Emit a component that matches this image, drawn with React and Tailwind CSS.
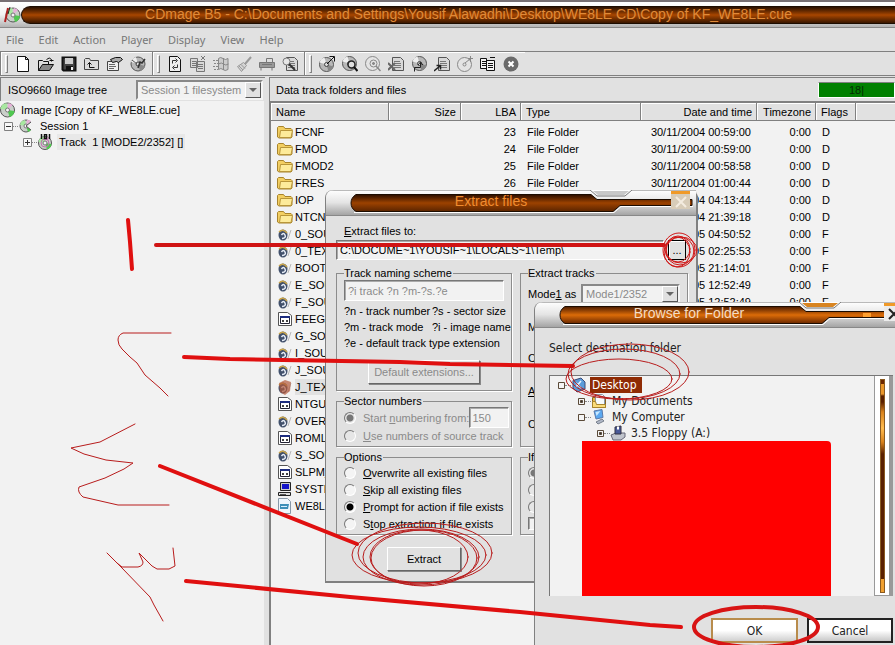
import clsx from 'clsx';

const menus = ['File', 'Edit', 'Action', 'Player', 'Display', 'View', 'Help'];

const columns = [
  { label: 'Name', width: 'w-[118px]' },
  { label: 'Size', width: 'w-[72px]', right: true },
  { label: 'LBA', width: 'w-[60px]', right: true },
  { label: 'Type', width: 'w-[120px]' },
  { label: 'Date and time', width: 'w-[116px]', right: true },
  { label: 'Timezone', width: 'w-[59px]', right: true },
  { label: 'Flags', width: 'w-[40px]' },
];

const files = [
  { icon: 'folder', name: 'FCNF', lba: 23, type: 'File Folder', date: '30/11/2004 00:59:00', flag: 'D' },
  { icon: 'folder', name: 'FMOD', lba: 24, type: 'File Folder', date: '30/11/2004 00:59:00', flag: 'D' },
  { icon: 'folder', name: 'FMOD2', lba: 25, type: 'File Folder', date: '30/11/2004 00:58:58', flag: 'D' },
  { icon: 'folder', name: 'FRES', lba: 26, type: 'File Folder', date: '30/11/2004 01:00:44', flag: 'D' },
  { icon: 'folder', name: 'IOP', date: '30/11/2004 04:13:44', flag: 'D' },
  { icon: 'folder', name: 'NTCN', date: '30/11/2004 21:39:18', flag: 'D' },
  { icon: 'afs', name: '0_SOU', date: '01/01/2005 04:50:52', flag: 'F' },
  { icon: 'afs', name: '0_TEX', date: '01/01/2005 02:25:53', flag: 'F' },
  { icon: 'afs', name: 'BOOT', date: '01/01/2005 21:14:01', flag: 'F' },
  { icon: 'afs', name: 'E_SOU', date: '01/01/2005 12:52:49', flag: 'F' },
  { icon: 'afs', name: 'F_SOU', date: '01/01/2005 12:52:49', flag: 'F' },
  { icon: 'bin', name: 'FEEGA' },
  { icon: 'afs', name: 'G_SO' },
  { icon: 'afs', name: 'I_SOU' },
  { icon: 'afs', name: 'J_SOU' },
  { icon: 'afs', name: 'J_TEX', selected: true },
  { icon: 'bin', name: 'NTGU' },
  { icon: 'afs', name: 'OVER' },
  { icon: 'bin', name: 'ROML' },
  { icon: 'afs', name: 'S_SOU' },
  { icon: 'bin', name: 'SLPM_' },
  { icon: 'computer', name: 'SYSTE' },
  { icon: 'doc', name: 'WE8L' },
];

const toolGroups = [
  ['new', 'open', 'save', 'up', 'props', 'burn'],
  ['refresh', 'copyDoc', 'windows', 'brush', 'print', 'findDoc'],
  ['discOut', 'discFind', 'discScan', 'docCross', 'discIn', 'docOut', 'discPlus', 'copy', 'stop'],
];

export default function App() {
  return (
    <div className="relative h-screen overflow-hidden flex flex-col bg-[#e1e1e1] font-['Liberation_Sans',Arial,sans-serif] text-[11px] leading-4 text-black">
      <TitleBar />
      <nav className="flex h-6 shrink-0 items-center gap-[15px] pl-[6px] border-b border-[#808080] font-['Noto_Sans',sans-serif] text-[#777]">
        {menus.map(m => <button key={m} type="button">{m}</button>)}
      </nav>
      <Toolbar />
      <div className="flex flex-1 min-h-0 pt-px">
        <ImageTree />
        <FileList />
      </div>
      <ExtractDialog />
      <BrowseDialog />
      <Markup />
    </div>
  );
}

function TitleBar() {
  return (
    <header className="flex h-7 shrink-0 items-center border-t-2 border-[#777074] border-b border-b-[#8a8a8a] bg-linear-to-b from-white via-[#f2f2f2] to-[#b4b4b4]">
      <svg className="ml-1 shrink-0" width="17" height="18" viewBox="0 0 17 18">
        <Disc cx={9} cy={9} r={7} />
        <path d="M4 2 1 16" stroke="#b02020" strokeWidth="2" />
        <path d="M6 1 4 8" stroke="#222" />
      </svg>
      <h1 className="flex-1 h-[18px] rounded-l-full border border-r-0 border-[#1c0c00] bg-linear-to-b from-[#2a1000] via-[#a84600] to-[#3a1700] text-center text-[14px] leading-[15px] text-[#e08a38] pr-[8px] pl-[28px] truncate">
        CDmage B5 - C:\Documents and Settings\Yousif Alawadhi\Desktop\WE8LE CD\Copy of KF_WE8LE.cue
      </h1>
    </header>
  );
}

function Toolbar() {
  return (
    <div className="flex h-6 shrink-0 border-b border-[#808080]">
      {toolGroups.map((group, i) => (
        <div key={i} className="flex items-center gap-[3px] border-l border-[#808080] pl-1 pr-[3px] shadow-[inset_1px_1px_0_#fff]">
          <span className="h-[18px] w-[3px] border border-white border-r-[#808080] border-b-[#808080]" />
          <div className="flex">
            {group.map(name => (
              <button key={name} type="button" aria-label={name} className="flex h-[22px] w-[23px] items-center justify-center">
                <svg width="16" height="16" viewBox="0 0 16 16" fill="none" stroke="#111" strokeWidth="1">
                  {toolIcons[name]}
                </svg>
              </button>
            ))}
          </div>
        </div>
      ))}
    </div>
  );
}

function GreyDisc({ cx = 8, cy = 8, r = 7 }) {
  return (
    <g>
      <circle cx={cx} cy={cy} r={r} fill="#b8b8b8" stroke="#555" />
      <path d={`M${cx} ${cy} L${cx - r} ${cy - 2} A${r} ${r} 0 0 1 ${cx - 2} ${cy - r} Z`} fill="#eee" stroke="none" />
      <path d={`M${cx} ${cy} L${cx + r} ${cy + 2} A${r} ${r} 0 0 1 ${cx + 2} ${cy + r} Z`} fill="#888" stroke="none" />
      <circle cx={cx} cy={cy} r="2" fill="#ddd" stroke="#444" />
    </g>
  );
}

function GreyDoc({ x = 4 }) {
  return (
    <g stroke="#555">
      <path d={`M${x + 0.5} 1.5h8l3 3v10h-11z`} fill="#d8d8d8" />
      <path d={`M${x + 2} 5.5h6M${x + 2} 7.5h7M${x + 2} 9.5h7M${x + 2} 11.5h7`} stroke="#777" />
    </g>
  );
}

const toolIcons = {
  new: <path d="M2.5.5h8l3 3v12h-11zM10.5.5v3h3" fill="#fff" />,
  open: (
    <>
      <path d="M.5 14.5V4.5h4l1 1h5v3" fill="#ddd" />
      <path d="M.5 14.5 4.5 8.500h11l-4 6z" fill="#888" />
      <path d="M8.500 3.500q3-3 5 0v2M11.500 4.500h4" />
    </>
  ),
  save: (
    <>
      <path d="M1.500 1.500h13v13h-12l-1-1z" fill="#444" strokeWidth="2" />
      <path d="M4 2h8v6H4z" fill="#ccc" stroke="none" />
      <path d="M5 10h7v4H5z" fill="#111" stroke="none" />
      <path d="M10 11h2v3h-2z" fill="#eee" stroke="none" />
    </>
  ),
  up: (
    <>
      <path d="M.5 13.500V3.500l1-1h4l1 2h8v9z" fill="#ddd" stroke="#444" />
      <path d="M5.500 6.500v5h5M3.500 8.500l2-2 2 2" />
    </>
  ),
  props: (
    <>
      <path d="M.5 5.500h11v9H.5z" fill="#eee" stroke="#444" />
      <path d="M2 8.500h6M2 10.500h7M2 12.500h5" stroke="#666" />
      <path d="M5.500 6.500 3.500 3.500 8.500 1.500h5l2 2-4 3-2-1z" fill="#aaa" />
    </>
  ),
  burn: (
    <>
      <GreyDisc />
      <path d="m8 12 2-6 2 1 3-4" strokeWidth="1.500" stroke="#333" />
      <path d="M2 4l5 4" stroke="#555" />
    </>
  ),
  refresh: (
    <>
      <path d="M2.500.5h8l3 3v12h-11z" fill="#eee" />
      <path d="M5.500 7.500v-3h4M8.500 2.500l2 2-2 2M10.500 8.500v3h-4M7.500 9.500l-2 2 2 2" stroke="#333" />
    </>
  ),
  copyDoc: (
    <g stroke="#777">
      <path d="M.5 2.500h7v9h-7zM6.500 5.500h8v10h-8z" fill="#d8d8d8" />
      <path d="M2 5.500h4M2 7.500h4M2 9.500h4M8 8.500h5M8 10.500h5M8 12.500h5M11 0l4 4M15 0l-4 4" />
    </g>
  ),
  windows: (
    <g stroke="#888">
      <path d="M5.500 2.500q2-2 4.500 0t5 0v11q-3 2-5 0t-4.500 0z" fill="#ccc" />
      <path d="M10.500 2v12M5.500 8q3-2 5 0t5 0" />
      <path d="M0 4.500h5M1 7.500h4M0 10.500h5M1 13.500h4" strokeDasharray="2 1" />
    </g>
  ),
  brush: (
    <g stroke="#999">
      <path d="m15 1-6 7" strokeWidth="2" />
      <path d="m1.500 10.500 6-4 3 3-5 6z" fill="#d4d4d4" />
      <path d="m3 10 4 4M5 8.500l4 4" />
    </g>
  ),
  print: (
    <g stroke="#777">
      <path d="M.5 6.500h15v5H.5z" fill="#999" />
      <path d="M7.500 2.500h6v4h-6zM2 11.500v3M13 11.500v3M3 8.500h10" fill="#ddd" />
    </g>
  ),
  findDoc: (
    <>
      <GreyDoc />
      <circle cx="4.500" cy="5.500" r="3.500" fill="#e6e6e6" stroke="#777" />
      <path d="m7 8 6 6" stroke="#333" strokeWidth="2" />
    </>
  ),
  discOut: (
    <>
      <GreyDisc cx={7.5} cy={8.5} />
      <path d="m8 8 7-7M10.500.5h5v5" stroke="#111" />
    </>
  ),
  discFind: (
    <>
      <GreyDisc cx={7.5} cy={7.5} />
      <circle cx="9.500" cy="8.500" r="3.500" fill="#ddd" stroke="#222" strokeWidth="1.500" />
      <path d="m12 11 3.500 4" strokeWidth="2" />
    </>
  ),
  discScan: (
    <g stroke="#888">
      <circle cx="7.500" cy="7.500" r="7" fill="#e4e4e4" />
      <circle cx="8.500" cy="7.500" r="3.500" />
      <path d="M7 7.500h3M8.500 6v3M11 10l4.500 5" strokeWidth="1.500" />
    </g>
  ),
  docCross: (
    <>
      <GreyDoc />
      <path d="m0 7 7 7M7 7l-7 7" stroke="#666" strokeWidth="2" />
    </>
  ),
  discIn: (
    <>
      <GreyDisc cx={8.5} cy={7.5} />
      <path d="M3.500 15.500v-4h6v-5M7 9l2.500-3L12 9" stroke="#222" />
    </>
  ),
  docOut: (
    <>
      <GreyDoc />
      <path d="m0 15 6-5M2.500 9.500h4v4" stroke="#222" strokeWidth="1.500" />
    </>
  ),
  discPlus: (
    <g stroke="#888">
      <circle cx="7.500" cy="8.500" r="7" fill="#e4e4e4" />
      <circle cx="7.500" cy="8.500" r="1.500" />
      <path d="m8 7 5-4M13.500 0v6M11 2.500h5" />
    </g>
  ),
  copy: (
    <>
      <path d="M.5 2.500h6v10h-6zM6.500 4.500h8v10h-8z" fill="#f4f4f4" />
      <path d="M2 5.500h4M2 7.500h4M2 9.500h4M8 7.500h5M8 9.500h5M8 11.500h5M10 1.500h5" />
    </>
  ),
  stop: (
    <>
      <circle cx="8" cy="8" r="7.500" fill="#6a6a6a" stroke="none" />
      <path d="m5.500 5.500 5 5M10.500 5.500l-5 5" stroke="#fff" strokeWidth="2" />
    </>
  ),
};

function Disc({ cx = 8, cy = 8, r = 7 }) {
  return (
    <g>
      <circle cx={cx} cy={cy} r={r} fill="#c9cfc9" stroke="#555" />
      <path d={`M${cx} ${cy} L${cx - r} ${cy - 1} A${r} ${r} 0 0 1 ${cx - 1} ${cy - r} Z`} fill="#a8e8a0" />
      <path d={`M${cx} ${cy} L${cx + r} ${cy + 1} A${r} ${r} 0 0 1 ${cx + 2} ${cy + r} Z`} fill="#50c850" />
      <path d={`M${cx} ${cy} L${cx + 1} ${cy - r} A${r} ${r} 0 0 1 ${cx + 5} ${cy - 5} Z`} fill="#e8b0d8" />
      <circle cx={cx} cy={cy} r="2" fill="#f4f4f4" stroke="#777" />
    </g>
  );
}

function Expander({ open }) {
  return (
    <svg className="shrink-0" width="9" height="9" viewBox="0 0 9 9" stroke="#333" fill="#f8f8f8">
      <path d="M.5.5h8v8h-8z" stroke="#808080" />
      <path d={open ? 'M2 4.500h5' : 'M2 4.500h5M4.500 2v5'} />
    </svg>
  );
}

function SelectBox({ label, value, className }) {
  return (
    <span className={clsx('flex h-5 items-center border-2 border-[#888] border-r-[#f4f4f4] border-b-[#f4f4f4] bg-[#f2f2f2]', className)}>
      <select aria-label={label} disabled className="min-w-0 flex-1 appearance-none pl-[3px] text-[#8a8a8a] opacity-100">
        <option>{value}</option>
      </select>
      <span className="flex h-4 w-4 items-center justify-center border border-white border-r-[#555] border-b-[#555] bg-[#e1e1e1]">
        <svg width="8" height="4" viewBox="0 0 8 4"><path d="M0 0h8L4 4z" fill="#666" /></svg>
      </span>
    </span>
  );
}

function ImageTree() {
  return (
    <section className="flex w-[265px] shrink-0 flex-col">
      <div className="flex h-6 items-center justify-between border-t border-l border-[#808080] pl-[7px] pr-[2px]">
        <h2>ISO9660 Image tree</h2>
        <SelectBox label="Filesystem" value="Session 1 filesystem" className="w-[127px]" />
      </div>
      <ul className="flex-1 border-r border-[#e1e1e1] bg-[#f2f2f2] pt-px">
        <li className="flex h-4 items-center gap-[5px]">
          <svg width="16" height="16" viewBox="0 0 16 16"><Disc cx={7.5} /></svg>
          Image [Copy of KF_WE8LE.cue]
        </li>
        <li className="flex h-4 items-center pl-1">
          <Expander open />
          <span className="w-[5px] border-t border-dotted border-[#888]" />
          <svg className="mr-[5px]" width="17" height="16" viewBox="0 0 17 16">
            <Disc cx={8} r={6} />
            <path d="M8 8 17 1v14z" fill="#f2f2f2" />
            <path d="M13 4 8 8l5 4" stroke="#555" fill="none" />
          </svg>
          Session 1
        </li>
        <li className="flex h-4 items-center pl-[23px]">
          <Expander />
          <span className="w-[5px] border-t border-dotted border-[#888]" />
          <svg className="mr-[3px]" width="17" height="16" viewBox="0 0 17 16">
            <Disc cx={8} cy={9} r={6.5} />
            <circle cx="8" cy="9" r="4" fill="none" stroke="#c070b0" />
            <path d="M4.500 0v5M12.500 0v5M7.500.5h2v4h-2z" stroke="#111" strokeWidth="1.500" fill="none" />
          </svg>
          <span className="whitespace-pre bg-[#e8e8e8] px-[2px]">{'Track  1 [MODE2/2352] []'}</span>
        </li>
      </ul>
    </section>
  );
}

const fileIcons = {
  folder: (
    <>
      <path d="M.5 13V3.500l1-1h5l1.500 2h6l1 1V13l-1 1h-12z" fill="#f3cf62" stroke="#a8842c" />
      <path d="M2.500 13.500 3.500 6.500h12l-1.500 7z" fill="#fdeb9a" stroke="#b8963a" />
    </>
  ),
  afs: (
    <>
      <ellipse cx="6" cy="9" rx="4.500" ry="5.500" fill="#41506b" />
      <path d="M2 6q4-4 8 1" stroke="#c9a54a" strokeWidth="1.500" fill="none" />
      <path d="M4.500 9q2-3 3.500 0t-3 3.500" stroke="#e8eef8" strokeWidth="1.500" fill="none" />
      <path d="m11 13 3-9" stroke="#b8b8b8" />
    </>
  ),
  bin: (
    <>
      <path d="M1.500 1.500h9l4 3v10h-13z" fill="#fff" stroke="#555" />
      <path d="M3.500 5.500h9v7h-9z" fill="#fff" stroke="#223" />
      <path d="M3 5h10v2H3z" fill="#1c2c80" />
      <path d="M5 9h2v2H5zM9 9h2v2H9z" fill="#444" />
    </>
  ),
  computer: (
    <>
      <path d="M3.500 1.500h10v8h-10z" fill="#ccc" stroke="#222" />
      <path d="M5 3h7v5H5z" fill="#1414c8" />
      <path d="M1.500 11.500h12v3h-12z" fill="#ddd" stroke="#222" />
      <path d="M3 13.500h6" stroke="#555" />
    </>
  ),
  doc: (
    <>
      <path d="M1.500.5h9l3 3v12h-12z" fill="#eef6fc" stroke="#8898a8" />
      <path d="M3 6h9l-1 5H3z" fill="#3d8fb8" />
      <path d="M4 8.500h6" stroke="#d8f0ff" />
    </>
  ),
};

function FileList() {
  return (
    <section className="flex min-w-0 flex-1 flex-col pl-[4px]">
      <div className="flex h-6 shrink-0 items-center justify-between border-t border-l border-[#808080] pl-[6px]">
        <h2>Data track folders and files</h2>
        <div role="progressbar" aria-valuenow={18} className="h-4 w-[77px] border border-white border-t-[#808080] bg-[#008000] text-center leading-[15px] text-[#032b03]">
          18|
        </div>
      </div>
      <div className="min-h-0 flex-1 overflow-hidden border-t-2 border-l-2 border-[#808080] bg-[#f2f2f2]">
        <table className="w-full table-fixed border-collapse">
          <thead>
            <tr className="h-[18px] bg-[#e1e1e1]">
              {columns.map(c => (
                <th
                  key={c.label}
                  className={clsx(
                    'p-0 px-[5px] font-normal leading-4 shadow-[inset_-1px_-1px_0_#808080,inset_1px_1px_0_#fff]',
                    c.width,
                    c.right ? 'text-right' : 'text-left',
                  )}
                >
                  {c.label}
                </th>
              ))}
              <th className="p-0 shadow-[inset_0_-1px_0_#808080,inset_1px_1px_0_#fff]" />
            </tr>
          </thead>
          <tbody>
            <tr className="h-[2px]"><td colSpan={8} className="p-0" /></tr>
            {files.map((f, i) => (
              <tr key={i} className="h-[17px] whitespace-nowrap">
                <td className="p-0 pl-[6px]">
                  <div className="flex h-[17px] items-center gap-[2px]">
                    <svg className="shrink-0" width="16" height="16" viewBox="0 0 16 16" fill="none">
                      {fileIcons[f.icon]}
                      {f.selected && <path d="M2 4l6-3 6 2-1 9-5 4-5-3z" fill="#b4583a" fillOpacity=".7" />}
                    </svg>
                    <span className={clsx(f.selected && 'bg-[#e1e1e1]')}>{f.name}</span>
                  </div>
                </td>
                <td />
                <td className="p-0 pr-[5px] text-right">{f.lba}</td>
                <td className="p-0 pl-[6px]">{f.type}</td>
                <td className="p-0 pr-[6px] text-right">{f.date}</td>
                <td className="p-0 pr-[5px] text-right">{f.date && '0:00'}</td>
                <td className="p-0 pl-[6px]">{f.flag}</td>
                <td />
              </tr>
            ))}
          </tbody>
        </table>
      </div>
    </section>
  );
}

function DialogTitle({ title, active }) {
  return (
    <div className="relative h-[26px] overflow-hidden rounded-tl-lg border-b border-[#888] bg-linear-to-b from-white via-[#e4e4e4] to-[#a4a4a4]">
      <svg className="absolute left-0 top-0" width="372" height="26" viewBox="0 0 372 26" fill="none">
        <defs>
          <linearGradient id={active ? 'barOn' : 'barOff'} x1="0" y1="0" x2="0" y2="1">
            <stop offset="0" stopColor={active ? '#4a1a00' : '#2a0e00'} />
            <stop offset=".5" stopColor={active ? '#dc6c08' : '#9c4200'} />
            <stop offset="1" stopColor={active ? '#6a2800' : '#5a2400'} />
          </linearGradient>
        </defs>
        <path d="M0 0h264l7 6h28l7-6h66" stroke="#777" />
        <path d="M267 1h36l-5 4h-26z" fill={active ? '#d88420' : '#c8c8c8'} />
        <path
          d="M30 4.500h235l6 5h95v6h-72l-7 6H30q-5-3-5-8.500t5-8.500z"
          fill={`url(#${active ? 'barOn' : 'barOff'})`}
          stroke="#1c0c00"
        />
        <path d="M28 22.500h260l7-6h72" stroke="#fff" />
        {active && <path d="M328 11h8v4h-8z" fill="#ffa030" />}
      </svg>
      <h2 className={clsx('relative text-center text-[14px] leading-[23px]', active ? 'w-[308px] pr-[0px] text-[#f4dcc4]' : 'w-[330px] text-[#f08c30]')}>
        {title}
      </h2>
      <button type="button" aria-label="Close" className={clsx('absolute top-[1px] h-[18px] w-[19px] border-t-[3px] border-[#f09a28]', active ? 'left-[349px] bg-[#ececec]' : 'left-[345px] bg-[#d8ccb8]')}>
        <svg className="mx-auto" width="12" height="12" viewBox="0 0 12 12" stroke={active ? '#222' : '#f4ece0'} strokeWidth="2">
          <path d="m1 1 10 10M11 1 1 11" />
        </svg>
      </button>
    </div>
  );
}

function Group({ title, className, children }) {
  return (
    <fieldset className={clsx('min-w-0 border border-[#8c8c8c] px-[7px] shadow-[1px_1px_0_#fff]', className)}>
      <legend className="pr-px leading-[14px]">{title}</legend>
      {children}
    </fieldset>
  );
}

function Radio({ name, children, ...props }) {
  return (
    <label className="flex h-[17px] items-center gap-[7px] has-disabled:text-[#8a8a8a] whitespace-nowrap">
      <input
        type="radio"
        name={name}
        className="h-3 w-3 shrink-0 appearance-none rounded-full border border-[#777] border-r-white border-b-white bg-[#f4f4f4] checked:bg-[radial-gradient(circle,#000_3px,#f4f4f4_4px)] disabled:bg-[#e6e6e6] disabled:checked:bg-[radial-gradient(circle,#777_3px,#e6e6e6_4px)]"
        {...props}
      />
      <span>{children}</span>
    </label>
  );
}

const raised = 'border border-white border-r-[#666] border-b-[#666] shadow-[1px_1px_0_#888] bg-[#e1e1e1]';
const sunken = 'border border-[#777] border-r-white border-b-white bg-[#f2f2f2] shadow-[inset_1px_1px_0_#aaa]';

function ExtractDialog() {
  return (
    <section className="absolute left-[325px] top-[190px] w-[373px] rounded-t-lg border-l border-r-2 border-b-2 border-[#808080] bg-[#e1e1e1] pb-[10px]">
      <DialogTitle title="Extract files" />
      <form className="px-[10px] pt-[7px]">
        <label htmlFor="target" className="block pl-2"><u>E</u>xtract files to:</label>
        <div className="flex gap-[4px] pt-px">
          <input id="target" defaultValue="C:\DOCUME~1\YOUSIF~1\LOCALS~1\Temp\" className={clsx('h-5 min-w-0 flex-1 px-[3px]', sunken)} />
          <button type="button" className="h-5 w-[18px] border border-black bg-[#e1e1e1] shadow-[inset_1px_1px_0_#fff]">...</button>
        </div>
        <div className="grid grid-cols-[176px_168px] gap-x-[8px] gap-y-[3px] pt-[6px]">
          <Group title="Track naming scheme">
            <input aria-label="Scheme" disabled defaultValue="?i track ?n ?m-?s.?e" className={clsx('block h-[21px] w-full px-[3px] text-[#8a8a8a]', sunken)} />
            <dl className="grid grid-cols-[88px_auto] whitespace-nowrap pt-[2px]">
              <dd>?n - track number</dd><dd>?s - sector size</dd>
              <dd>?m - track mode</dd><dd>?i - image name</dd>
              <dd className="col-span-2">?e - default track type extension</dd>
            </dl>
            <button type="button" disabled className={clsx('mt-[9px] mb-[6px] mx-auto block h-6 w-28 text-[#8a8a8a]', raised)}>Default extensions...</button>
          </Group>
          <Group title="Extract tracks" className="row-span-2">
            <div className="flex items-center justify-between pt-[4px]">
              <span>Mode<u>1</u> as</span>
              <SelectBox label="Mode1 as" value="Mode1/2352" className="w-[99px]" />
            </div>
            <p className="pt-[15px]">M</p>
            <p className="pt-[15px]">C</p>
            <p className="pt-[17px]"><u>A</u></p>
            <p className="pt-[17px]">C</p>
          </Group>
          <Group title="Sector numbers" className="pb-[2px]">
            <div className="flex h-[19px] items-center justify-between">
              <Radio name="sector" disabled defaultChecked>Start <u>n</u>umbering from:</Radio>
              <input aria-label="First sector" disabled defaultValue="150" className={clsx('h-[21px] w-10 shrink-0 px-[2px] text-[#8a8a8a]', sunken)} />
            </div>
            <Radio name="sector" disabled><u>U</u>se numbers of source track</Radio>
          </Group>
          <Group title="Options" className="pb-[2px]">
            <Radio name="option"><u>O</u>verwrite all existing files</Radio>
            <Radio name="option"><u>S</u>kip all existing files</Radio>
            <Radio name="option" defaultChecked><u>P</u>rompt for action if file exists</Radio>
            <Radio name="option">S<u>t</u>op extraction if file exists</Radio>
          </Group>
          <Group title="If" className="pb-[2px]">
            <Radio name="rename" aria-label="First" disabled defaultChecked />
            <Radio name="rename" aria-label="Second" disabled />
            <Radio name="rename" aria-label="Third" disabled />
            <input type="checkbox" aria-label="Keep" className={clsx('mt-[2px] block h-[13px] w-[13px] appearance-none', sunken)} />
          </Group>
        </div>
        <button type="button" className={clsx('mt-3 ml-[51px] block h-6 w-[74px]', raised)}>Extract</button>
      </form>
    </section>
  );
}

function Node({ level, open, label, selected, children }) {
  const indent = ['pl-[8px]', 'pl-[28px]', 'pl-[47px]'][level];
  return (
    <li className={clsx('flex h-4 items-center', indent)}>
      <svg width="7" height="7" viewBox="0 0 7 7" fill="#f4f4f4" stroke="#5a4a38">
        <path d="M.5.5h6v6h-6z" />
        {!open && <path d="M2.500 2.500h2v2h-2z" fill="#333" />}
      </svg>
      <span className="w-[6px] border-t border-dotted border-[#888]" />
      <svg className="mr-[3px]" width="16" height="16" viewBox="0 0 16 16" fill="none">{children}</svg>
      <span className={clsx('px-[2px]', selected && 'bg-[#8f2b04] pr-[5px] text-white')}>{label}</span>
    </li>
  );
}

function BrowseDialog() {
  return (
    <section className="absolute left-[534px] right-0 top-[302px] bottom-0 flex flex-col overflow-hidden rounded-tl-lg border-l border-[#808080] bg-[#e1e1e1] font-['DejaVu_Sans_Condensed','DejaVu_Sans',sans-serif] text-[12px] text-[#222]">
      <div className="shrink-0 font-['Liberation_Sans',Arial,sans-serif]">
        <DialogTitle title="Browse for Folder" active />
      </div>
      <p className="pl-[14px] pt-[12px]">Select destination folder</p>
      <div className="ml-[14px] mr-[2px] mt-[19px] flex min-h-0 flex-1 border-t border-l border-[#777] bg-[#f2f2f2]">
        <ul className="flex flex-1 flex-col pt-px">
          <Node level={0} open selected label="Desktop">
            <path d="M2 3.500 10 1l4 4v7l-8 3-4-4z" fill="#5b9bd8" stroke="#3a4a78" />
            <path d="m5 10 5-6M5 6l5 5" stroke="#e8f4ff" strokeWidth="1.500" />
          </Node>
          <Node level={1} label="My Documents">
            <path d="M1.500 4.500h5l1 1h7v9h-13z" fill="#e8b848" stroke="#8a6420" />
            <path d="M4.500 1.500h7l2 2v8h-9z" fill="#f6fafc" stroke="#8898a8" />
            <path d="M1.500 14.500v-6h3l1 3h9v3z" fill="#fbdc7a" stroke="#a8842c" />
          </Node>
          <Node level={1} open label="My Computer">
            <path d="m3 2 8-1.500 1 8L5 10z" fill="#5aa8f0" stroke="#5a78a8" />
            <path d="m4.500 3 5-1-4 5z" fill="#c8e8ff" />
            <path d="m5 13 6-3 2 2-6 3z" fill="#b0b8c8" stroke="#78808c" />
          </Node>
          <Node level={2} label="3.5 Floppy (A:)">
            <path d="m1 10 5-2h9v4l-4 3H3z" fill="#c0c4cc" stroke="#667" />
            <path d="m5 2 6-1v8H5z" fill="#4a5a98" stroke="#334" />
            <path d="M7 1.500h2v3H7z" fill="#fff" />
          </Node>
          <li className="ml-[32px] mr-[43px] flex-1 rounded-tr-sm bg-[#ff0000]" />
        </ul>
        <div className="flex w-[19px] justify-center border border-t-0 border-[#999] border-r-4 bg-white pt-[3px] pb-[2px]">
          <div className="w-[5px] border border-[#8a5a20] bg-[linear-gradient(#6b2600_0_4px,#e8962a_4px_14px,#5a2000_16px_22px,#d8821c_32px,#ffbc50_48px,#d8821c_62px,#5a2000_74px_82%,#5a2000_94%,#f0a030_94%)]" />
        </div>
      </div>
      <div className="flex shrink-0 justify-end gap-[9px] pt-[22px] pb-[2px] pr-[2px]">
        <button type="button" className="h-[25px] w-[87px] border-2 border-[#b88c4c] bg-linear-to-b from-white via-white to-[#d0d0d0]">OK</button>
        <button type="button" className="h-[25px] w-[86px] border-2 border-[#222] bg-linear-to-b from-white via-white to-[#c8c8c8]">Cancel</button>
      </div>
    </section>
  );
}

// hand drawn step marks laid over the windows
function Markup() {
  return (
    <svg className="pointer-events-none absolute left-0 top-0" width="895" height="645" viewBox="0 0 895 645" fill="none" stroke="#b81c1c" strokeLinecap="round" strokeLinejoin="round">
      <g stroke="#e01010" strokeWidth="4">
        <path d="M128 220 130 242 132 269" />
        <path d="M156 245H664" stroke="#d01414" />
        <path d="M184 357 230 359 400 362 450 364 573 366" />
        <path d="M160 466 357 544" />
        <path d="M186 581 350 597 520 612 650 625 681 627" />
        <ellipse cx="756" cy="627" rx="62" ry="20" stroke="#d81414" />
      </g>
      <path d="M171 333H123Q118 335 118 340 118 345 122 349L130 357 137 363 145 375 160 388 168 396" />
      <path d="M135 424 100 442 71 448 84 454 106 460 133 463 124 469 105 478 79 487Q77 492 83 497L118 505H169" />
      <path d="M107 553 122 568 150 597 154 605 163 621M117 563 122 567H138Q143 566 143 562L139 553 145 559 152 566 157 569H169L175 566 173 548" />
      <g stroke="#d01818">
        <ellipse cx="679" cy="250" rx="16" ry="17" />
        <ellipse cx="680" cy="251" rx="14" ry="14" />
        <ellipse cx="678" cy="249" rx="12" ry="13" />
        <ellipse cx="681" cy="250" rx="16" ry="13" />
        <ellipse cx="677" cy="252" rx="13" ry="15" />
      </g>
      <g>
        <ellipse cx="619" cy="379" rx="53" ry="20" />
        <ellipse cx="624" cy="374" rx="56" ry="25" />
        <ellipse cx="630" cy="372" rx="59" ry="28" />
      </g>
      <g>
        <ellipse cx="419" cy="557" rx="49" ry="27" />
        <ellipse cx="421" cy="557" rx="58" ry="28" />
        <ellipse cx="419" cy="555" rx="67" ry="28" />
        <ellipse cx="425" cy="553" rx="67" ry="30" />
        <ellipse cx="424" cy="558" rx="53" ry="28" />
      </g>
    </svg>
  );
}
